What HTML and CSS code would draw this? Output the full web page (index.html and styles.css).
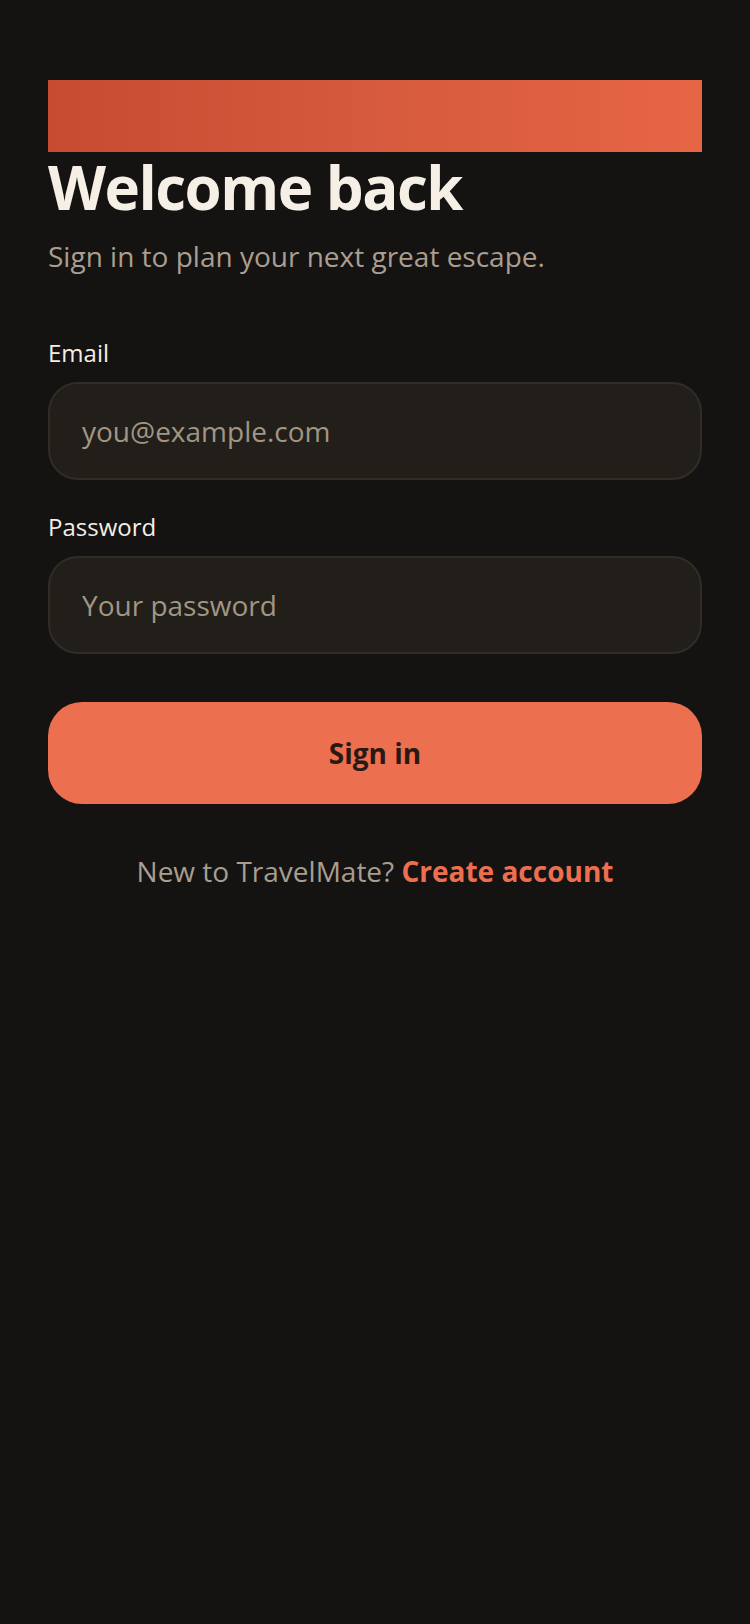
FILE: index.html
```html
<!DOCTYPE html>
<html lang="en">
<head>
<meta charset="utf-8">
<meta name="viewport" content="width=750">
<title>Sign in - TravelMate</title>
<link rel="stylesheet" href="styles.css">
</head>
<body>
<main class="page">
  <div class="banner"></div>
  <h1 class="title">Welcome back</h1>
  <p class="subtitle">Sign in to plan your next great escape.</p>
  <form class="form">
    <label class="field">
      <span class="label">Email</span>
      <input class="input" type="email" placeholder="you@example.com">
    </label>
    <label class="field">
      <span class="label">Password</span>
      <input class="input" type="password" placeholder="Your password">
    </label>
    <button class="button" type="button">Sign in</button>
  </form>
  <p class="footer">New to TravelMate? <a class="link" href="#">Create account</a></p>
</main>
</body>
</html>
```
FILE: styles.css
```css
html, body {
  margin: 0;
  padding: 0;
  background: #141312;
}
body {
  font-family: "Open Sans", "Noto Sans", sans-serif;
  color: #f5efe6;
  min-height: 1624px;
}
.page {
  padding: 80px 48px 0;
  display: flex;
  flex-direction: column;
}
.banner {
  height: 72px;
  background: linear-gradient(90deg, #c64b31 0%, #d65a3d 50%, #e66545 100%);
}
.title {
  margin: 0;
  font-size: 60px;
  font-weight: 700;
  letter-spacing: -1.5px;
  line-height: 70px;
  color: #f6efe5;
}
.subtitle {
  margin: 16px 0 0;
  font-size: 28px;
  line-height: 36px;
  color: #aa9e8f;
}
.form {
  margin-top: 63px;
  display: flex;
  flex-direction: column;
}
.field {
  display: flex;
  flex-direction: column;
  margin-bottom: 31px;
}
.label {
  font-size: 24px;
  line-height: 32px;
  color: #f4eee6;
  margin-bottom: 13px;
}
.input {
  box-sizing: border-box;
  height: 98px;
  border-radius: 30px;
  border: 2px solid #302c26;
  background: #221f1a;
  padding: 0 32px;
  font-family: inherit;
  font-size: 28px;
  color: #f4eee6;
  outline: none;
}
.input::placeholder {
  color: #a19584;
}
.button {
  margin-top: 17px;
  height: 102px;
  border: none;
  border-radius: 34px;
  background: #ec6f4f;
  color: #2a1913;
  font-family: inherit;
  font-size: 28px;
  font-weight: 700;
}
.footer {
  margin: 48px 0 0;
  text-align: center;
  font-size: 28px;
  line-height: 38px;
  color: #a99d8f;
}
.link {
  color: #ec6f4f;
  font-weight: 700;
  text-decoration: none;
}
```
